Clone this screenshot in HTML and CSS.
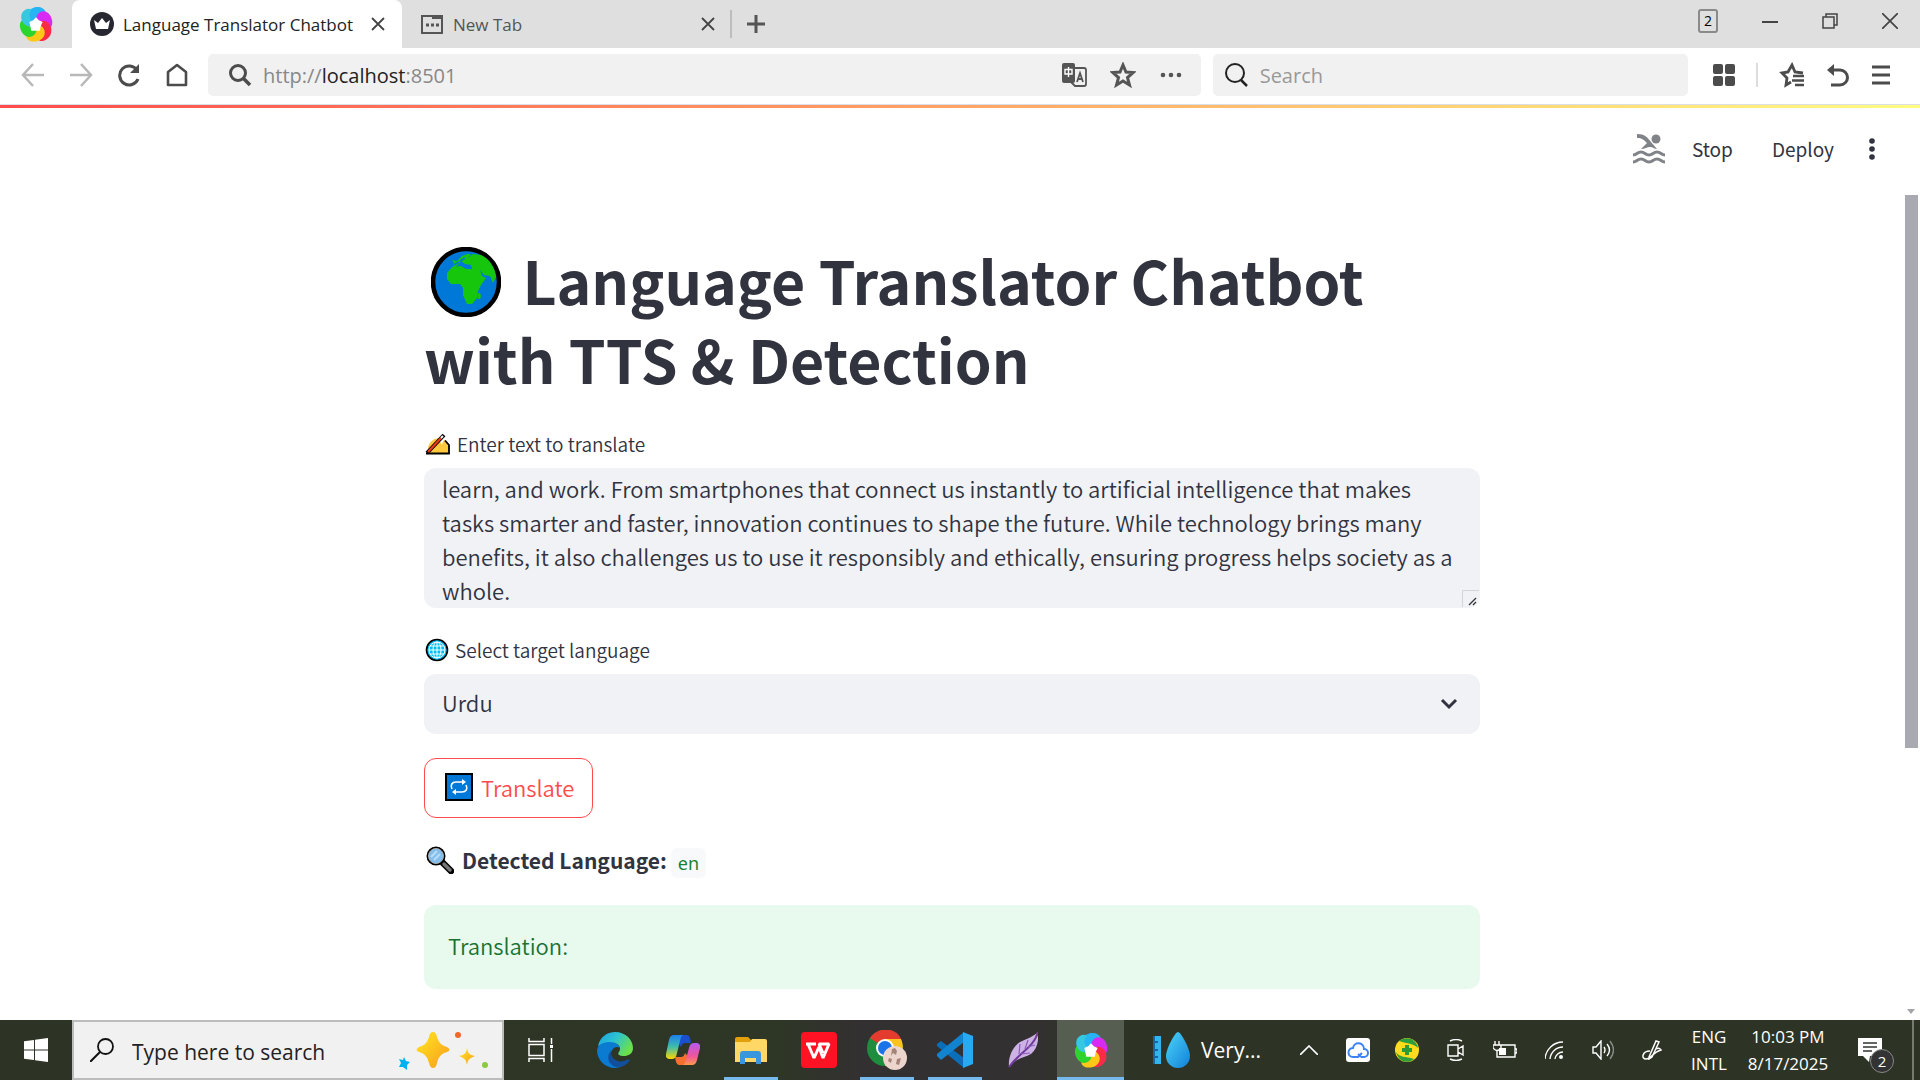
FILE: index.html
```html
<!DOCTYPE html>
<html lang="en">
<head>
<meta charset="utf-8">
<title>Language Translator Chatbot</title>
<link rel="stylesheet" href="styles.css">
</head>
<body>
<svg class="sprite" aria-hidden="true">
  <filter id="soft"><feGaussianBlur stdDeviation="0.8"/></filter>
  <symbol id="pinwheel" viewBox="0 0 40 40">
    <g filter="url(#soft)">
      <path fill="#28b4f5" d="M20 20C8 17 8 3 21 2c7 0 10 4 9 8-5-2-11 1-10 10z"/>
      <path fill="#d82cf5" d="M20 20C16 8 29 2 35 11c4 7 2 13-2 14-1-7-7-10-13-5z"/>
      <path fill="#fb2b4a" d="M20 20c9-9 20 1 15 12-4 6-9 7-12 5 4-5 4-12-3-17z"/>
      <path fill="#fdc918" d="M20 20c12 2 12 15 2 18-8 2-13-2-12-6 6 1 11-4 10-12z"/>
      <path fill="#2fd42e" d="M20 20c4 12-8 18-14 10-5-7-3-14 1-15 1 7 7 10 13 5z"/>
      <path fill="#35c8e0" d="M20 20C11 27 2 18 5 9c3-5 7-6 11-4-4 4-4 10 4 15z"/>
      <path fill="#28b4f5" d="M20 20C12 16 10 6 21 2c4 0 6 1 7 4-5 0-9 6-8 14z"/>
      <path fill="#fff" d="M20 13l3 3 4 2-2 4-1 5-4 0-5 0-1-5-1-4 4-2z"/>
    </g>
  </symbol>
</svg>

<header class="browser">
  <div class="tabstrip">
    <div class="brand"><svg width="38" height="38"><use href="#pinwheel"/></svg></div>
    <div class="tab tab-active">
      <svg width="24" height="24" viewBox="0 0 24 24"><circle cx="12" cy="12" r="12" fill="#262730"/><path fill="#fff" d="M4 8l4 3 4-5 4 5 4-3-2 9H6z"/></svg>
      <span class="tab-title">Language Translator Chatbot</span>
      <button class="icon-btn" aria-label="Close tab"><svg width="14" height="14" viewBox="0 0 14 14"><path d="M1 1l12 12M13 1L1 13" stroke="#444" stroke-width="1.800"/></svg></button>
    </div>
    <div class="tab tab-idle">
      <svg width="22" height="20" viewBox="0 0 22 20"><path d="M1 2h20v17H1z" fill="none" stroke="#555" stroke-width="2"/><path d="M11 1h10v4H11z" fill="#555"/><path d="M5 11h3M10 11h3M15 11h3" stroke="#555" stroke-width="3"/></svg>
      <span class="tab-title">New Tab</span>
      <button class="icon-btn" aria-label="Close tab"><svg width="14" height="14" viewBox="0 0 14 14"><path d="M1 1l12 12M13 1L1 13" stroke="#444" stroke-width="1.800"/></svg></button>
    </div>
    <button class="icon-btn new-tab" aria-label="Open new tab"><svg width="20" height="20" viewBox="0 0 20 20"><path d="M10 1v18M1 10h18" stroke="#555" stroke-width="3"/></svg></button>
    <div class="window-controls">
      <button class="tab-count">2</button>
      <button class="icon-btn" aria-label="Minimize"><svg width="16" height="16" viewBox="0 0 16 16"><path d="M0 9h16" stroke="#444" stroke-width="2"/></svg></button>
      <button class="icon-btn" aria-label="Restore"><svg width="16" height="16" viewBox="0 0 16 16"><path d="M1 4h11v11H1zM4 4V1h11v11h-3" fill="none" stroke="#444" stroke-width="1.5"/></svg></button>
      <button class="icon-btn" aria-label="Close"><svg width="16" height="16" viewBox="0 0 16 16"><path d="M0 0l16 16M16 0L0 16" stroke="#444" stroke-width="1.7"/></svg></button>
    </div>
  </div>

  <div class="toolbar">
    <nav class="nav-buttons">
      <button class="icon-btn" aria-label="Back"><svg width="24" height="24" viewBox="0 0 24 24"><path d="M23 12H3M12 1L2 12l10 11" fill="none" stroke="#b8b8b8" stroke-width="2.5"/></svg></button>
      <button class="icon-btn" aria-label="Forward"><svg width="24" height="24" viewBox="0 0 24 24"><path d="M1 12h20M12 1l10 11-10 11" fill="none" stroke="#b8b8b8" stroke-width="2.5"/></svg></button>
      <button class="icon-btn" aria-label="Reload"><svg width="24" height="24" viewBox="0 0 24 24"><path d="M20 7a9.500 9.500 0 1 0 1 9" fill="none" stroke="#4c4c4c" stroke-width="3"/><path d="M22 1v9h-9z" fill="#4c4c4c"/></svg></button>
      <button class="icon-btn" aria-label="Home"><svg width="24" height="24" viewBox="0 0 24 24"><path d="M3 22V9l9-7 9 7v13z" fill="none" stroke="#4c4c4c" stroke-width="2.600" stroke-linejoin="round"/></svg></button>
    </nav>
    <div class="address">
      <svg width="24" height="24" viewBox="0 0 24 24"><circle cx="10" cy="10" r="7.500" fill="none" stroke="#4c4c4c" stroke-width="3"/><path d="M15 15l7 7" stroke="#4c4c4c" stroke-width="3.500"/></svg>
      <span class="url">http://<b>localhost</b>:8501</span>
      <div class="address-actions">
        <button class="icon-btn" aria-label="Translate page"><svg width="26" height="26" viewBox="0 0 26 26"><path d="M14 6h9a2 2 0 0 1 2 2v14a2 2 0 0 1-2 2H14l-4-4" fill="none" stroke="#555" stroke-width="1.800"/><rect x="1" y="1" width="13" height="20" rx="2" fill="#555"/><path d="M4 7.500h7v4.500H4zM7.500 5v10" fill="none" stroke="#fff" stroke-width="1.400"/><path d="M16 20l3-9 3 9M17 17h4" fill="none" stroke="#555" stroke-width="1.800"/></svg></button>
        <button class="icon-btn" aria-label="Bookmark"><svg width="26" height="26" viewBox="0 0 26 26"><path d="M13 3l3 7 7 .6-5.500 5 2 7.400-6.500-4-6.500 4 2-7.400L3 10.600 10 10z" fill="none" stroke="#555" stroke-width="3"/></svg></button>
        <button class="icon-btn" aria-label="More"><svg width="24" height="6" viewBox="0 0 24 6"><g fill="#555"><circle cx="4" cy="3" r="2.300"/><circle cx="12" cy="3" r="2.300"/><circle cx="20" cy="3" r="2.300"/></g></svg></button>
      </div>
    </div>
    <label class="web-search">
      <svg width="24" height="24" viewBox="0 0 24 24"><circle cx="11" cy="10" r="9" fill="none" stroke="#222" stroke-width="2"/><path d="M17 17l6 6" stroke="#222" stroke-width="2.500"/></svg>
      <input type="text" placeholder="Search" aria-label="Web search">
    </label>
    <div class="extras">
      <button class="icon-btn" aria-label="Apps"><svg width="22" height="22" viewBox="0 0 22 22"><g fill="#4c4c4c"><rect width="10" height="10" rx="2"/><rect x="12" width="10" height="10" rx="2"/><rect y="12" width="10" height="10" rx="2"/><rect x="12" y="12" width="10" height="10" rx="2"/></g></svg></button>
      <span class="divider"></span>
      <button class="icon-btn" aria-label="Favourites"><svg width="26" height="26" viewBox="0 0 26 26"><path d="M12 20l-5 3 1-7-5-5 6-1 4-7 3 7 8 1" fill="none" stroke="#4c4c4c" stroke-width="2.800"/><path d="M14 14h11M13 18.500h12M16 23h9" stroke="#4c4c4c" stroke-width="2.500"/></svg></button>
      <button class="icon-btn" aria-label="Undo"><svg width="24" height="24" viewBox="0 0 24 24"><path d="M4 7h10a7.500 7.500 0 0 1 0 15H5" fill="none" stroke="#4c4c4c" stroke-width="3"/><path d="M1 7l7-6v12z" fill="#4c4c4c"/></svg></button>
      <button class="icon-btn" aria-label="Menu"><svg width="20" height="20" viewBox="0 0 20 20"><path d="M1 2h18M1 10h18M1 18h18" stroke="#4c4c4c" stroke-width="3"/></svg></button>
    </div>
  </div>
</header>

<div class="page">
  <div class="rainbow"></div>
  <div class="app-bar">
    <svg class="swimmer" width="34" height="30" viewBox="0 0 34 30"><g fill="#808489"><circle cx="24" cy="5" r="4.500"/><path d="M5 0c8 0 10 3 14 8l6 7c-3 0-4-2-7-2s-5 2-9 2l6-6C12 6 10 4 5 4z"/></g><path d="M1 21c4 0 4-3 8-3s4 3 8 3 4-3 8-3 4 3 8 3M1 28c4 0 4-3 8-3s4 3 8 3 4-3 8-3 4 3 8 3" fill="none" stroke="#808489" stroke-width="3"/></svg>
    <button class="text-btn">Stop</button>
    <button class="text-btn">Deploy</button>
    <button class="icon-btn" aria-label="Main menu"><svg width="6" height="22" viewBox="0 0 6 22"><g fill="#31333f"><circle cx="3" cy="3" r="2.800"/><circle cx="3" cy="11" r="2.800"/><circle cx="3" cy="19" r="2.800"/></g></svg></button>
  </div>

  <div class="scroller">
  <main class="content">
    <h1><svg class="globe" width="70" height="70" viewBox="0 0 70 70"><circle cx="35" cy="35" r="33" fill="#0078d7" stroke="#000" stroke-width="4.500"/><path fill="#16c60c" d="M22 21l1-5-2-3 5 1 5-5 6-2 3 0-3 4 5-4 8 1c9 4 14 13 15 22l-3 6-3-7-6-1-4-5 2 6 4 2-5 7-3 6-1 7-5 6-5 0-4-9 0-7-3-4-9 0-4-5 0-6 5-6 9-1 5 3 6 0-1-4-6-1-4-3-3 4z"/><path d="M23 18l5-3M29 14l5-3M31 19l8 1" stroke="#0078d7" stroke-width="1.700"/><ellipse cx="48" cy="49" rx="1.800" ry="3" fill="#16c60c"/></svg> Language Translator Chatbot with TTS &amp; Detection</h1>

    <div class="field">
      <label for="source-text"><svg width="26" height="22" viewBox="0 0 26 22"><path d="M3 17Q3 7 13 5l4 7q1-5 3-5l4 5v8H3z" fill="#ffc83d"/><path d="M1 20.500h23V12l-4-4.500" fill="none" stroke="#000" stroke-width="1.800"/><path d="M2 20L19 2" stroke="#000" stroke-width="4"/><path d="M3 19L16 5" stroke="#f03a17" stroke-width="2.200"/><path d="M16 5l2-2" stroke="#fff" stroke-width="2"/></svg>Enter text to translate</label>
      <div class="textarea-wrap">
        <textarea id="source-text">learn, and work. From smartphones that connect us instantly to artificial intelligence that makes tasks smarter and faster, innovation continues to shape the future. While technology brings many benefits, it also challenges us to use it responsibly and ethically, ensuring progress helps society as a whole.</textarea>
        <svg class="grip" width="17" height="17" viewBox="0 0 17 17"><path d="M.5 17V.5H17" fill="none" stroke="#d3d4d8"/><path d="M7 15l7-7M11 15l3-3" stroke="#333" stroke-width="1.300"/></svg>
      </div>
    </div>

    <div class="field">
      <label for="target-language"><svg width="24" height="24" viewBox="0 0 24 24"><circle cx="12" cy="12" r="10.500" fill="#00bcf2" stroke="#000" stroke-width="1.600"/><g fill="none" stroke="#fff" stroke-width="1"><circle cx="12" cy="12" r="8"/><ellipse cx="12" cy="12" rx="4" ry="8"/><path d="M12 4v16M4 12h16M5 8h14M5 16h14"/></g></svg>Select target language</label>
      <div class="select-wrap">
        <select id="target-language"><option>Urdu</option></select>
        <svg class="chevron" width="18" height="12" viewBox="0 0 18 12"><path d="M2 2l7 7 7-7" fill="none" stroke="#31333f" stroke-width="3"/></svg>
      </div>
    </div>

    <button class="translate"><svg width="28" height="28" viewBox="0 0 28 28"><path d="M1 1h26v26H1z" fill="#0078d7" stroke="#000" stroke-width="2"/><path d="M7 16c-2-4 0-7 4-7h7M21 12c2 4 0 7-4 7h-7" fill="none" stroke="#fff" stroke-width="1.600"/><path d="M17 6l4 3-4 3zM11 16l-4 3 4 3z" fill="#fff"/></svg>Translate</button>

    <p class="detected"><svg width="28" height="28" viewBox="0 0 28 28"><path d="M17 17l8 8" stroke="#000" stroke-width="6.500" stroke-linecap="round"/><path d="M18 18l6 6" stroke="#767676" stroke-width="3.500" stroke-linecap="round"/><circle cx="10" cy="10" r="8.500" fill="#83beec" stroke="#000" stroke-width="2"/><circle cx="10" cy="10" r="7.500" fill="none" stroke="#aaa" stroke-width="1"/><path d="M5 11l6-6M8 14l6-6" stroke="#b9dcf7" stroke-width="2"/></svg><strong>Detected Language:</strong><code>en</code></p>

    <div class="success" role="status">Translation:</div>
  </main>
  </div>
  <div class="scroll-thumb"></div>
  <svg class="scroll-down" width="8" height="5" viewBox="0 0 8 5"><path d="M0 0h8L4 5z" fill="#a3a4a9"/></svg>
</div>

<footer class="taskbar">
  <button class="start" aria-label="Start"><svg width="24" height="24" viewBox="0 0 24 24"><path fill="#fff" d="M0 3.300L10 2v9.500H0zM11 1.800L24 0v11.500H11zM0 12.500h10V22L0 20.700zM11 12.500h13V24l-13-1.800z"/></svg></button>
  <label class="task-search">
    <svg width="24" height="24" viewBox="0 0 24 24"><circle cx="15.500" cy="8.500" r="7.500" fill="none" stroke="#111" stroke-width="1.800"/><path d="M10 14L0 24" stroke="#111" stroke-width="2"/></svg>
    <input type="text" placeholder="Type here to search" aria-label="Type here to search">
    <svg width="92" height="40" viewBox="0 0 92 40"><defs><linearGradient id="gold" x1="0" y1="0" x2="1" y2="1"><stop offset="0.300" stop-color="#ffd21f"/><stop offset="1" stop-color="#f79a1c"/></linearGradient></defs><path fill="url(#gold)" d="M35 2q3 0 4 5c2 6 4 8 10 10q5 3 0 5c-6 2-8 4-10 11q-1 5-4 5t-4-5c-2-7-4-9-10-11q-5-2 0-5c6-2 8-4 10-10q1-5 4-5z"/><path fill="url(#gold)" d="M69 18c1 6 3 7 8 8-5 2-7 3-8 9-1-6-3-7-8-9 5-1 7-2 8-8z"/><path fill="#00b0f0" d="M6 27l2 4 4 1-3 3v5l-4-3-4 0 2-4-2-4 4 1z"/><circle cx="60" cy="5" r="3" fill="#f7642b"/><circle cx="87" cy="35" r="3" fill="#8bc93f"/></svg>
  </label>
  <button class="task-view" aria-label="Task view"><svg width="26" height="24" viewBox="0 0 26 24"><g fill="none" stroke="#fff" stroke-width="1.500"><path d="M1 6.500h15v11H1zM1 0v3.500h15V0M1 24v-3.500h15V24M23.500 0v6M23.500 11v13"/></g><path d="M22 7h3v3h-3z" fill="#fff"/></svg></button>

  <nav class="apps">
    <button class="app" aria-label="Edge"><svg width="36" height="36" viewBox="0 0 36 36"><defs><linearGradient id="eg" x1="0" x2="1" y1="0" y2="0.500"><stop offset="0" stop-color="#1a9fe0"/><stop offset="0.500" stop-color="#2cc3d3"/><stop offset="1" stop-color="#6be04b"/></linearGradient></defs><path fill="url(#eg)" d="M1 14C3 5 10 0 18 0c11 0 18 8 18 16 0 6-5 8-9 8-5 0-7-2-5-4 3-5-1-9-6-9-7 0-12 2-15 3z"/><path fill="#0a7bd1" d="M0 18C1 12 7 10 13 10c6 0 9 3 10 6-4-3-9 1-9 6 0 7 6 12 13 11-3 2-6 3-9 3C8 36 0 28 0 18z"/><path fill="#114f9c" d="M14 19c-1 6 5 12 13 10 2-1 4-2 6-1-3 5-9 8-14 7-8-2-10-11-5-16z"/></svg></button>
    <button class="app" aria-label="Copilot"><svg width="34" height="30" viewBox="0 0 34 30"><defs><linearGradient id="ca" x1="0" x2="0" y1="0" y2="1"><stop offset="0" stop-color="#1b7ff0"/><stop offset="0.500" stop-color="#3fbfa8"/><stop offset="1" stop-color="#ffd400"/></linearGradient><linearGradient id="cb" x1="0" x2="0" y1="0" y2="1"><stop offset="0" stop-color="#b45bf0"/><stop offset="0.600" stop-color="#f0559a"/><stop offset="1" stop-color="#ff9a4a"/></linearGradient></defs><path fill="#1a4fd0" d="M8 0h13q3 0 4 8h-6q-3 0-4 4z"/><path fill="#f5702f" d="M9 22h6q3 0 4-4l7 8q-1 4-5 4h-8q-3 0-4-8z"/><path fill="url(#ca)" d="M8 0h9q-2 1-3 6l-3 12q-1 6-5 6H3q-4-1-3-5L3 5q1-5 5-5z"/><path fill="url(#cb)" d="M26 30H17q2-1 3-6l3-11q1-5 5-5h3q4 1 3 5l-3 12q-1 5-5 5z"/></svg></button>
    <button class="app app-open" aria-label="File Explorer"><svg width="32" height="27" viewBox="0 0 32 27"><path d="M0 2q0-2 2-2h11l3 3v6H0z" fill="#e2a10b"/><path d="M0 5h15l2-3h13q2 0 2 2v21H0z" fill="#ffd766"/><path d="M5 27V17q0-3 3-3h15q3 0 3 3v10h-5v-6H10v6z" fill="#3a96dd"/></svg></button>
    <button class="app" aria-label="WPS Office"><svg width="36" height="36" viewBox="0 0 36 36"><rect width="36" height="36" rx="4" fill="#ff1224"/><path d="M5 12h10M7 12l6 14 5-11 4 11 6-14H18l4 9" fill="none" stroke="#fff" stroke-width="3" stroke-linejoin="bevel"/></svg></button>
    <button class="app app-open" aria-label="Chrome"><svg width="40" height="40" viewBox="0 0 40 40"><circle cx="18" cy="18" r="18" fill="#1e8e3e"/><path d="M18 18L3 8C11-4 29-3 34 9z" fill="#e33b2e"/><path d="M18 9h16c6 14-3 26-16 27l8-14z" fill="#fcc31e"/><circle cx="18" cy="18" r="9" fill="#fff"/><circle cx="18" cy="18" r="7" fill="#1a73e8"/><circle cx="28" cy="28" r="12" fill="#ecd5cd"/><path d="M25 19l3-1 2 3-1 4-3-2-2 3zM22 28l3 1-1 4-3-2zM30 29l4-1-2 7-3-1z" fill="#a48478"/></svg></button>
    <button class="app app-open" aria-label="Visual Studio Code"><svg width="36" height="36" viewBox="0 0 36 36"><path d="M27 26L4 9 0 12v2l27 22z" fill="#0a6fb8"/><path d="M27 10L4 28l-4-4v-2L27 0z" fill="#1283cf"/><path d="M26 0l10 4v28l-10 4z" fill="#29a9f2"/></svg></button>
    <button class="app" aria-label="Feather"><svg width="30" height="36" viewBox="0 0 30 36"><path d="M30 0c1 9-1 17-7 22-5 3-9 3-14 6-4 2-6 5-8 7C0 26 4 15 12 10 20 6 25 5 30 0z" fill="#cdb2e6"/><path d="M30 0C26 15 12 20 1 35" fill="none" stroke="#6f3c9c" stroke-width="2"/><path d="M11 22L12 12M17 17l3-9M13 22l9-1M20 15l7-2" fill="none" stroke="#8c5cb8" stroke-width="1.200"/></svg></button>
    <button class="app app-open app-active" aria-label="Browser"><svg width="38" height="38"><use href="#pinwheel"/></svg></button>
  </nav>

  <button class="weather"><svg width="37" height="36" viewBox="0 0 37 36"><defs><linearGradient id="drop" x1="0" x2="1" y1="0" y2="1"><stop offset="0" stop-color="#4cd5fa"/><stop offset="1" stop-color="#1180d8"/></linearGradient></defs><path d="M0 4h8v28H0z" fill="#32b4ec"/><path d="M0 4h2v28H0zM2 9h3v2H2zM2 17h3v2H2zM2 24h3v2H2z" fill="#1567ac"/><path d="M25 0c3 0 12 17 12 24a12 12 0 0 1-24 0C13 17 22 0 25 0z" fill="url(#drop)"/></svg>Very...</button>

  <div class="tray">
    <button aria-label="Show hidden icons"><svg width="18" height="10" viewBox="0 0 18 10"><path d="M0 10l9-9 9 9" fill="none" stroke="#fff" stroke-width="1.600"/></svg></button>
    <button aria-label="Cloud sync"><svg width="24" height="24" viewBox="0 0 24 24"><rect width="24" height="24" rx="3" fill="#fff"/><path d="M15 19l-3-3M15 19h3a4 4 0 0 0 0-8c0-7-10-8-11-1-6 0-6 9 0 9h5l4-4" fill="none" stroke="#3c82f6" stroke-width="2"/></svg></button>
    <button aria-label="Security"><svg width="24" height="24" viewBox="0 0 24 24"><circle cx="12" cy="12" r="12" fill="#ffdc1e"/><path d="M4 3c7-5 17-3 19 7-5-5-10-4-19-7zM1 14c4 6 9 4 18 7-7 6-16 2-18-7z" fill="#2f9e3d"/><path d="M12 7v10M7 12h10" stroke="#2c9b34" stroke-width="4"/></svg></button>
    <button aria-label="Meet now"><svg width="18" height="22" viewBox="0 0 18 22"><path d="M1 6h10v11H1zM11 10l5-3v9l-5-3M3 2q6-3 12 0M3 20q6 3 12 0" fill="none" stroke="#fff" stroke-width="1.400"/></svg></button>
    <button aria-label="Battery"><svg width="24" height="18" viewBox="0 0 24 18"><path d="M7 4h15v12H4v-6M22 8h2v4h-2M2 0v4M6 0v4M0 4h8v3q-4 5-8 0z" fill="none" stroke="#fff" stroke-width="1.400"/><path d="M6 7h7v7H6z" fill="#fff"/></svg></button>
    <button aria-label="Wi-Fi"><svg width="18" height="18" viewBox="0 0 18 18"><path d="M0 18A18 18 0 0 1 18 1M5 18A13 13 0 0 1 18 6M10 18a8 8 0 0 1 8-7" fill="none" stroke="#fff" stroke-width="1.400"/><circle cx="16" cy="16" r="2" fill="#fff"/></svg></button>
    <button aria-label="Volume"><svg width="22" height="20" viewBox="0 0 22 20"><path d="M1 7h3l5-6v18l-5-6H1zM12 7q2 3 0 6M15 4q5 6 0 12" fill="none" stroke="#fff" stroke-width="1.400"/><path d="M18 1q7 9 0 18" fill="none" stroke="#888c85" stroke-width="1.400"/></svg></button>
    <button aria-label="Ink workspace"><svg width="20" height="20" viewBox="0 0 20 20"><path d="M7 17l7-16 3 1-7 15-3 2zM8 11c-8 0-9 8-4 8s7-7 15-9q-2-3-5-1" fill="none" stroke="#fff" stroke-width="1.500"/></svg></button>
  </div>
  <button class="status">ENG<br>INTL</button>
  <button class="status status-clock">10:03 PM<br>8/17/2025</button>
  <button class="notifications" aria-label="2 notifications"><svg width="24" height="24" viewBox="0 0 24 24"><path d="M0 0h24v18H12l-1 6-6-6H0z" fill="#fff"/><path d="M5 5h14M5 9h14M5 13h9" stroke="#333" stroke-width="1.400"/></svg><span class="badge">2</span></button>
  <button class="show-desktop" aria-label="Show desktop"></button>
</footer>
</body>
</html>
```
FILE: styles.css
```css
* { box-sizing: border-box; }

body {
  --ui: "Open Sans", "Noto Sans", sans-serif;
  --app: "Noto Sans CJK SC", sans-serif;
  display: flex;
  flex-direction: column;
  height: 100vh;
  margin: 0;
  overflow: hidden;
  background: #fff;
  font-family: var(--ui);
  color: #222;
}

svg { flex: none; display: block; }
.sprite { position: absolute; width: 0; height: 0; }

button {
  padding: 0;
  border: 0;
  background: none;
  color: inherit;
  font: inherit;
}

input, textarea, select {
  border: 0;
  outline: 0;
  background: none;
  font: inherit;
}

.icon-btn {
  display: flex;
  align-items: center;
  justify-content: center;
}

/* Browser chrome */
.browser { flex: none; }

.tabstrip {
  display: flex;
  height: 48px;
  background: #dfdfdf;
}

.brand {
  display: flex;
  align-items: center;
  justify-content: center;
  width: 72px;
}

.tab {
  display: flex;
  align-items: center;
  width: 330px;
  font-size: 17px;
}
.tab-active {
  gap: 9px;
  padding: 0 17px 0 18px;
  border-radius: 8px 8px 0 0;
  background: #fff;
}
.tab-idle {
  gap: 10px;
  margin: 10px 0 10px;
  padding: 0 15px 0 19px;
  border-right: 2px solid #bdbdbd;
  color: #555;
}
.tab-title {
  flex: 1;
  white-space: nowrap;
}
.new-tab { width: 48px; }

.window-controls {
  display: flex;
  align-items: center;
  gap: 44px;
  margin-left: auto;
  padding: 0 22px 6px 0;
}
.tab-count {
  width: 20px;
  height: 24px;
  border: 2px solid #8a8a8a;
  border-radius: 3px;
  color: #000;
  font-size: 14px;
  line-height: 20px;
}

.toolbar {
  display: flex;
  align-items: center;
  height: 57px;
  padding: 0 29px 2px 21px;
  border-bottom: 1px solid #dcdfe8;
}
.nav-buttons {
  display: flex;
  gap: 24px;
  margin-right: 19px;
}
.address, .web-search {
  display: flex;
  align-items: center;
  height: 42px;
  border-radius: 5px;
  background: #f1f1f1;
  font-size: 20px;
}
.address {
  flex: 954 1 0;
  padding: 0 18px 0 20px;
}
.url {
  flex: 1;
  margin-left: 11px;
  color: #888;
}
.url b {
  color: #222;
  font-weight: 400;
}
.address-actions {
  display: flex;
  gap: 23px;
}
.web-search {
  flex: 464 1 0;
  gap: 12px;
  margin-left: 12px;
  padding-left: 11px;
}
.web-search input { flex: 1; padding: 0; }
.web-search input::placeholder { color: #999; }
.extras {
  display: flex;
  align-items: center;
  gap: 21px;
  margin-left: 25px;
}
.divider {
  width: 2px;
  height: 24px;
  background: #ddd;
}

/* Page viewport */
.page {
  position: relative;
  flex: 1;
  min-height: 0;
  overflow: hidden;
  font-family: var(--app);
  font-size: 22px;
  font-weight: 350;
  color: #31333f;
}
.rainbow {
  height: 3px;
  background: linear-gradient(to right, #ff4b4b, #fffd80);
}
.app-bar {
  display: flex;
  align-items: center;
  justify-content: flex-end;
  height: 82px;
  padding-right: 45px;
}
.text-btn {
  font-size: 19px;
  font-weight: 400;
  line-height: 28px;
}
.swimmer + .text-btn { margin: 0 39px 0 26px; }
.text-btn + .icon-btn { margin-left: 35px; }

/* The right padding is the scrollbar gutter */
.scroller { padding-right: 16px; }
.content {
  max-width: 1056px;
  margin: 0 auto;
  padding-top: 50px;
}

h1 {
  margin: 0 0 32px;
  font-size: 59px;
  font-weight: 700;
  line-height: 79px;
}
.globe {
  display: inline-block;
  margin: 0 8px 0 7px;
  vertical-align: -12px;
}

.field { margin-bottom: 28px; }
.field + .field { margin-bottom: 24px; }
.field label {
  display: flex;
  align-items: center;
  gap: 6px;
  height: 28px;
  margin-bottom: 10px;
  padding-left: 1px;
  font-size: 19px;
  line-height: 28px;
}

.textarea-wrap, .select-wrap {
  position: relative;
  border-radius: 12px;
  background: #f0f2f6;
}
.textarea-wrap { height: 140px; }
textarea {
  display: block;
  width: 100%;
  height: 100%;
  padding: 3px 18px 0;
  overflow: hidden;
  resize: none;
  color: inherit;
  line-height: 34px;
}
.grip {
  position: absolute;
  right: 1px;
  bottom: 1px;
}
select {
  display: block;
  width: 100%;
  height: 60px;
  padding: 0 18px 4px;
  appearance: none;
  color: inherit;
}
.chevron {
  position: absolute;
  top: 24px;
  right: 22px;
}

.translate {
  display: flex;
  align-items: center;
  gap: 8px;
  height: 60px;
  padding: 0 18px 2px 20px;
  border: 1px solid #ff4b4b;
  border-radius: 12px;
  color: #ff4b4b;
}

.detected {
  display: flex;
  align-items: center;
  gap: 8px;
  height: 39px;
  margin: 24px 0;
  padding: 0 0 3px 2px;
}
.detected strong {
  font-size: 21px;
  font-weight: 600;
}
code {
  margin: 6px 0 0 -4px;
  padding: 0 7px;
  border-radius: 6px;
  background: #f8f9fb;
  color: #158237;
  font-family: "Noto Sans", sans-serif;
  font-size: 18px;
  font-weight: 400;
  line-height: 30px;
}

.success {
  padding: 22px 24px 26px;
  border-radius: 12px;
  background: #e8f9ee;
  color: #177233;
  line-height: 36px;
}

.scroll-thumb {
  position: absolute;
  top: 90px;
  right: 2px;
  width: 13px;
  height: 553px;
  background: #a9aab1;
}
.scroll-down {
  position: absolute;
  right: 5px;
  bottom: 6px;
}

/* Windows taskbar */
.taskbar {
  display: flex;
  flex: none;
  height: 60px;
  background: linear-gradient(to right, #2d3425 0, #2e3626 780px, #333031 860px, #333031 1020px, #2d3425 1130px);
  color: #fff;
}
.start {
  display: flex;
  align-items: center;
  justify-content: center;
  width: 72px;
}
.task-search {
  display: flex;
  align-items: center;
  gap: 18px;
  width: 432px;
  padding: 0 12px 0 16px;
  border: 2px solid #bcbcbc;
  background: #f1f1f1;
  font-size: 21px;
}
.task-search input {
  flex: 1;
  min-width: 0;
  padding: 3px 0 0;
}
.task-search input::placeholder { color: #222; }
.task-view {
  display: flex;
  align-items: center;
  justify-content: center;
  width: 77px;
  padding-right: 4px;
}

.apps { display: flex; }
.app {
  position: relative;
  display: flex;
  align-items: center;
  justify-content: center;
  width: 68px;
}
.app-open::after {
  content: "";
  position: absolute;
  right: 7px;
  bottom: 0;
  left: 7px;
  height: 3px;
  background: #76b9ed;
}
.app-active {
  width: 67px;
  background: #565e51;
}
.app-active::after { right: 0; left: 0; }

.weather {
  display: flex;
  align-items: center;
  gap: 11px;
  margin-left: 29px;
  font-size: 21px;
}
.tray {
  display: flex;
  margin-left: auto;
}
.tray button {
  display: flex;
  align-items: center;
  justify-content: center;
  width: 49px;
}
.status {
  width: 54px;
  margin-left: 6px;
  font-size: 17px;
  line-height: 27px;
  white-space: nowrap;
}
.status-clock {
  width: 104px;
  margin-left: 0;
}
.notifications {
  position: relative;
  width: 44px;
  margin: 0 10px 0 18px;
}
.badge {
  position: absolute;
  top: 29px;
  left: 12px;
  width: 24px;
  height: 24px;
  border: 1px solid #888;
  border-radius: 50%;
  background: #333;
  font-size: 15px;
  line-height: 22px;
}
.show-desktop {
  width: 8px;
  border-left: 2px solid #777b72;
}
```
